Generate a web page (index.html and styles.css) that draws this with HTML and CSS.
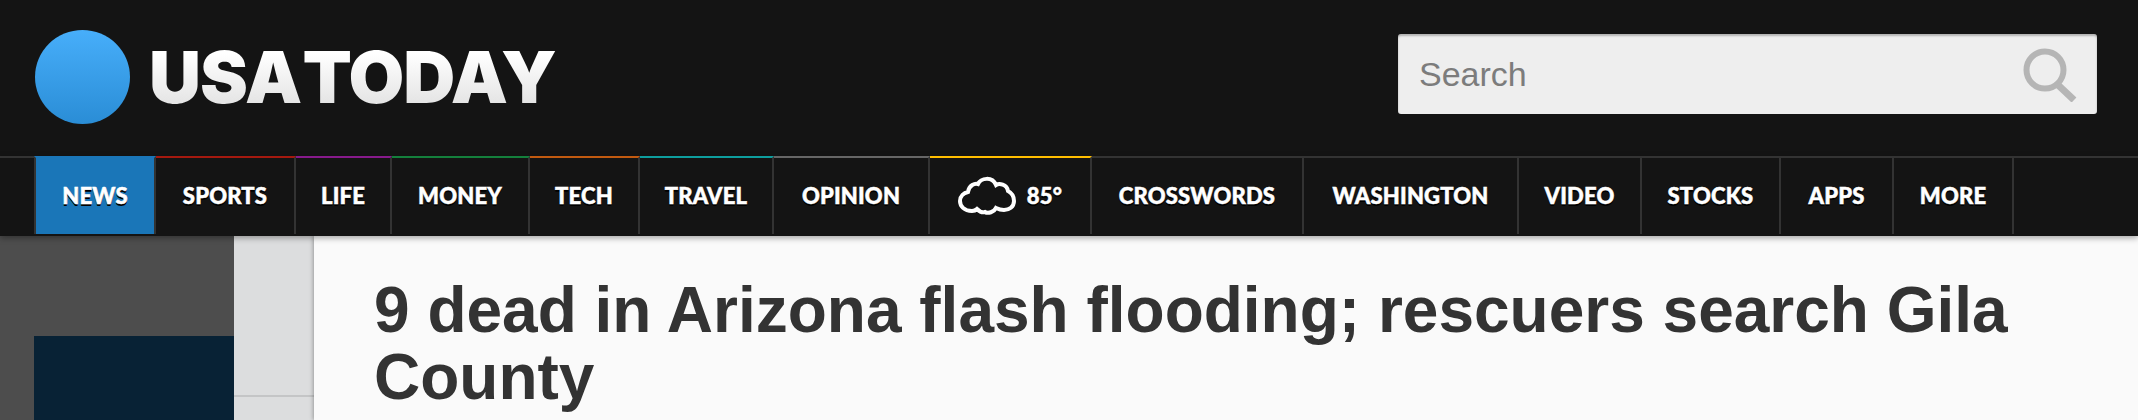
FILE: index.html

```html
<!DOCTYPE html>
<html lang="en">
<head>
    <meta charset="UTF-8">
    <meta name="viewport" content="width=device-width, initial-scale=1.0">
    <title>USA TODAY</title>
    <link rel="stylesheet" href="styles.css">
</head>
<body>
    <header class="masthead">
        <a class="logo" href="#">
            <span class="logo-dot"></span>
            <span class="logo-text">USA TODAY</span>
        </a>
        <form class="search">
            <span class="search-label">Search</span>
            <svg class="search-icon" width="56" height="56" viewBox="0 0 56 56">
                <circle cx="24" cy="24" r="18.500" fill="none" stroke="#b5b5b5" stroke-width="6"/>
                <path d="M36 38 L53 54" fill="none" stroke="#b5b5b5" stroke-width="7"/>
            </svg>
        </form>
    </header>

    <nav class="nav">
        <ul class="nav-list">
            <li class="nav-item nav-news"><a href="#">NEWS</a></li>
            <li class="nav-item nav-sports"><a href="#">SPORTS</a></li>
            <li class="nav-item nav-life"><a href="#">LIFE</a></li>
            <li class="nav-item nav-money"><a href="#">MONEY</a></li>
            <li class="nav-item nav-tech"><a href="#">TECH</a></li>
            <li class="nav-item nav-travel"><a href="#">TRAVEL</a></li>
            <li class="nav-item nav-opinion"><a href="#">OPINION</a></li>
            <li class="nav-item nav-weather">
                <a href="#">
                    <svg class="cloud" width="58" height="40" viewBox="0 0 58 40">
                        <path d="M14 36 C6 36 2 31 2 26 C2 21 6 18 10 17 C11 10 17 8 20 9 C23 3 34 1 38 10 C41 8 49 9 50 16 C54 18 56 22 56 26 C56 32 51 35 46 35 C43 35 40 34 38 33 C36 37 30 39 27 37 C24 38 21 36 19 34 C18 35 16 36 14 36 Z" fill="none" stroke="#fff" stroke-width="4"/>
                    </svg>
                    85°
                </a>
            </li>
            <li class="nav-item"><a href="#">CROSSWORDS</a></li>
            <li class="nav-item"><a href="#">WASHINGTON</a></li>
            <li class="nav-item"><a href="#">VIDEO</a></li>
            <li class="nav-item"><a href="#">STOCKS</a></li>
            <li class="nav-item"><a href="#">APPS</a></li>
            <li class="nav-item"><a href="#">MORE</a></li>
        </ul>
    </nav>

    <div class="page">
        <div class="rail">
            <div class="rail-block"></div>
        </div>
        <div class="side">
            <div class="side-top"></div>
            <div class="side-bottom"></div>
        </div>
        <main class="story">
            <h1>9 dead in Arizona flash flooding; rescuers search Gila County</h1>
        </main>
    </div>
</body>
</html>
```

FILE: styles.css

```css
html, body {
    height: 100%;
}

body {
    margin: 0;
    display: flex;
    flex-direction: column;
    overflow: hidden;
    font-family: "Liberation Sans", Arial, sans-serif;
    background-color: #141414;
}

a {
    color: inherit;
    text-decoration: none;
}

/* masthead */
.masthead {
    height: 156px;
    flex: none;
    display: flex;
    align-items: flex-start;
    justify-content: space-between;
    padding: 0 41px 0 35px;
    box-sizing: border-box;
}

.logo {
    display: flex;
    align-items: center;
    gap: 19px;
    margin-top: 30px;
}

.logo-dot {
    width: 95px;
    height: 94px;
    border-radius: 50%;
    background: linear-gradient(#47aefa, #2a8dd6);
}

.logo-text {
    font-family: Inter, sans-serif;
    font-weight: 900;
    font-size: 72px;
    line-height: 94px;
    letter-spacing: -1px;
    word-spacing: -12px;
    background: linear-gradient(#ffffff 25%, #e6e6e6 75%);
    -webkit-background-clip: text;
    background-clip: text;
    color: transparent;
}

.search {
    width: 699px;
    height: 80px;
    margin-top: 34px;
    padding: 0 21px;
    box-sizing: border-box;
    display: flex;
    align-items: center;
    justify-content: space-between;
    background-color: #eeeeee;
    border-radius: 3px;
    box-shadow: inset 0 2px 2px rgba(0, 0, 0, 0.25);
}

.search-label {
    font-size: 34px;
    color: #7c7c7c;
}

.search-icon {
    margin-right: -1px;
}

/* nav */
.nav {
    position: relative;
    z-index: 1;
    flex: none;
    height: 80px;
    box-sizing: border-box;
    padding-left: 34px;
    background-color: #141414;
    border-top: 2px solid #333333;
    box-shadow: 0 2px 6px rgba(0, 0, 0, 0.35);
}

.nav-list {
    display: grid;
    grid-template-columns: 122px 140px 96px 138px 110px 134px 156px 162px 212px 215px 123px 139px 113px 120px;
    height: 78px;
    margin: -2px 0 0;
    padding: 0;
    list-style-type: none;
}

.nav-item {
    border-top: 2px solid #333333;
    border-right: 2px solid #333333;
}

.nav-item a {
    height: 100%;
    padding-bottom: 2px;
    box-sizing: border-box;
    display: flex;
    align-items: center;
    justify-content: center;
    gap: 11px;
    font-family: Lato, sans-serif;
    font-weight: 900;
    font-size: 22px;
    letter-spacing: 0.2px;
    color: #ffffff;
    -webkit-text-stroke: 0.5px #ffffff;
    text-shadow: 0 2px 0 #000000;
}

.nav-news {
    border-left: 2px solid #333333;
    border-right-color: #333333;
    border-top-color: #1a76b8;
    background-color: #1a76b8;
}

.nav-sports { border-top-color: #a5190f; }
.nav-life { border-top-color: #871a8c; }
.nav-money { border-top-color: #14803c; }
.nav-tech { border-top-color: #c25a10; }
.nav-travel { border-top-color: #0e9e9e; }
.nav-opinion { border-top-color: #666666; }
.nav-weather { border-top-color: #ffbe00; }

.nav-weather a {
    padding-left: 11px;
}

.cloud {
    margin-left: -11px;
}

/* page */
.page {
    flex: 1;
    display: grid;
    grid-template-columns: 234px 80px 1fr;
    min-height: 0;
    overflow: hidden;
}

.rail {
    padding: 100px 0 0 34px;
    background-color: #4d4d4d;
}

.rail-block {
    height: 100%;
    background-color: #082235;
}

.side {
    background-color: #dcddde;
}

.side-top {
    height: 159px;
    border-bottom: 2px solid #c4c5c6;
}

.story {
    padding: 41px 60px 0;
    background-color: #fafafa;
    box-shadow: -1px 0 4px rgba(0, 0, 0, 0.3);
}

.story h1 {
    margin: 0;
    font-size: 64px;
    line-height: 67px;
    font-weight: bold;
    color: #333333;
}
```
